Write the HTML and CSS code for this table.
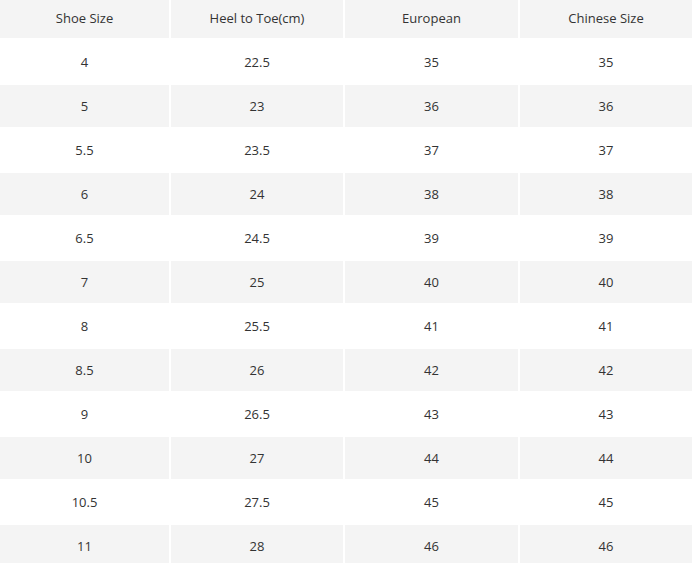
FILE: index.html
```html
<!DOCTYPE html>
<html>
<head>
<meta charset="utf-8">
<link rel="stylesheet" href="styles.css">
</head>
<body>
<div class="chart">
  <div class="row head"><div class="cell">Shoe Size</div><div class="cell">Heel to Toe(cm)</div><div class="cell">European</div><div class="cell">Chinese Size</div></div>
  <div class="row first"><div class="cell">4</div><div class="cell">22.5</div><div class="cell">35</div><div class="cell">35</div></div>
  <div class="row alt"><div class="cell">5</div><div class="cell">23</div><div class="cell">36</div><div class="cell">36</div></div>
  <div class="row"><div class="cell">5.5</div><div class="cell">23.5</div><div class="cell">37</div><div class="cell">37</div></div>
  <div class="row alt"><div class="cell">6</div><div class="cell">24</div><div class="cell">38</div><div class="cell">38</div></div>
  <div class="row"><div class="cell">6.5</div><div class="cell">24.5</div><div class="cell">39</div><div class="cell">39</div></div>
  <div class="row alt"><div class="cell">7</div><div class="cell">25</div><div class="cell">40</div><div class="cell">40</div></div>
  <div class="row"><div class="cell">8</div><div class="cell">25.5</div><div class="cell">41</div><div class="cell">41</div></div>
  <div class="row alt"><div class="cell">8.5</div><div class="cell">26</div><div class="cell">42</div><div class="cell">42</div></div>
  <div class="row"><div class="cell">9</div><div class="cell">26.5</div><div class="cell">43</div><div class="cell">43</div></div>
  <div class="row alt"><div class="cell">10</div><div class="cell">27</div><div class="cell">44</div><div class="cell">44</div></div>
  <div class="row"><div class="cell">10.5</div><div class="cell">27.5</div><div class="cell">45</div><div class="cell">45</div></div>
  <div class="row alt"><div class="cell">11</div><div class="cell">28</div><div class="cell">46</div><div class="cell">46</div></div>
</div>
</body>
</html>
```
FILE: styles.css
```css
html, body {
  margin: 0;
  padding: 0;
  background: #ffffff;
}
body {
  font-family: "Open Sans", "Noto Sans", sans-serif;
  font-size: 13px;
  color: #333333;
  overflow: hidden;
}
.chart {
  display: flex;
  flex-direction: column;
  gap: 2px;
}
.row {
  display: grid;
  grid-template-columns: 169px 172px 173px 172px;
  column-gap: 2px;
  height: 42px;
}
.row.head {
  height: 38px;
}
.row.head .cell {
  padding-bottom: 2px;
}
.row.first {
  margin-top: 1px;
}
.cell {
  display: flex;
  align-items: center;
  justify-content: center;
}
.head .cell,
.alt .cell {
  background: #f4f4f4;
}
```
